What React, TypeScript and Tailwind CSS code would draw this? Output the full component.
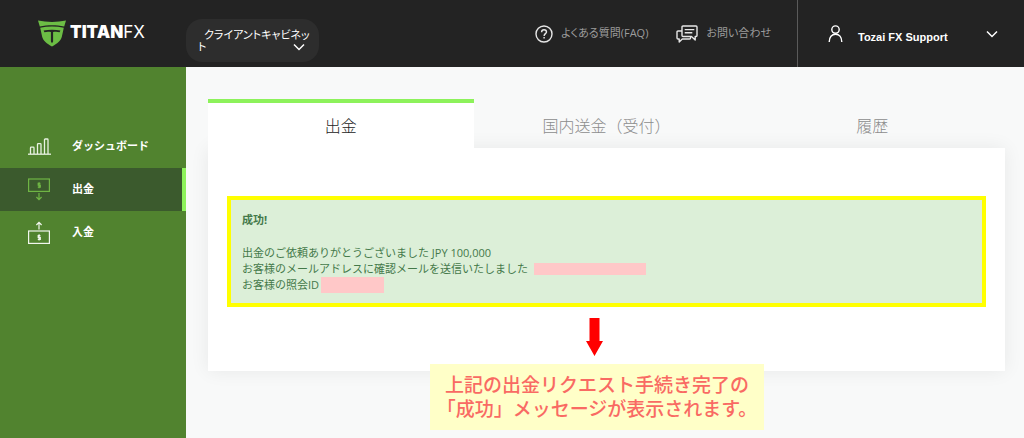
import { useState } from 'react';

type TabKey = 'withdraw' | 'domestic' | 'history';

const TABS: { key: TabKey; label: string }[] = [
  { key: 'withdraw', label: '出金' },
  { key: 'domestic', label: '国内送金（受付）' },
  { key: 'history', label: '履歴' },
];

const MENU = [
  { label: 'ダッシュボード', Icon: ChartIcon, active: false },
  { label: '出金', Icon: WithdrawIcon, active: true },
  { label: '入金', Icon: DepositIcon, active: false },
];

function LogoMark() {
  return (
    <svg width="28" height="27" viewBox="0 0 28 27" fill="#6cbd45" aria-hidden="true">
      <path d="M0 0.5C9 2.4 19 2.4 28 0.5L26.2 6.4C18.5 4.7 9.5 4.7 1.8 6.4Z" />
      <path d="M2.2 7.8C9.8 6.1 18.2 6.1 25.8 7.8L23.9 16.5C23 20.8 19.2 23.6 14 26.6C8.8 23.6 5 20.8 4.1 16.5Z" />
      <path d="M5.6 10.6C11 9.6 17 9.6 22.4 10.6L21.6 12.2C19.4 11.6 17.2 11.5 15.1 12.1V21.5L14 23.2L12.9 21.5V12.1C10.8 11.5 8.6 11.6 6.4 12.2Z" fill="#232323" />
    </svg>
  );
}

function ChevronIcon() {
  return (
    <svg width="12" height="8" viewBox="0 0 12 8" fill="none" stroke="#fff" strokeWidth="1.5" aria-hidden="true">
      <path d="M1 1.5L6 6.5L11 1.5" />
    </svg>
  );
}

function QuestionIcon() {
  return (
    <svg width="18" height="18" viewBox="0 0 18 18" fill="none" stroke="#e6e6e6" strokeWidth="1.4" aria-hidden="true">
      <circle cx="9" cy="9" r="8" />
      <path d="M6.6 7.2C6.6 5.6 7.6 4.7 9 4.7S11.5 5.6 11.5 6.9C11.5 8.6 9.1 8.7 9.1 10.9" />
      <path d="M9.1 12V13.5" />
    </svg>
  );
}

function ChatIcon() {
  return (
    <svg width="22" height="18" viewBox="0 0 22 18" fill="none" stroke="#e6e6e6" strokeWidth="1.4" strokeLinejoin="round" aria-hidden="true">
      <path d="M7 1H20Q21 1 21 2V10.5Q21 11.5 20 11.5H19.2V15L15.5 11.5H7Q6 11.5 6 10.5V2Q6 1 7 1Z" />
      <path d="M8.7 4.6H18.3M8.7 7.8H16.3" />
      <path d="M6 6H2Q1 6 1 7V13Q1 14 2 14H3.2V17L6.3 14H13.5Q14.6 14 14.6 12.8V11.5" />
    </svg>
  );
}

function UserIcon() {
  return (
    <svg width="15" height="17" viewBox="0 0 15 17" fill="none" stroke="#fff" strokeWidth="1.4" aria-hidden="true">
      <circle cx="7.5" cy="4.6" r="3.7" />
      <path d="M1.2 17C1.2 12.2 3.8 9.2 7.5 9.2S13.8 12.2 13.8 17" />
    </svg>
  );
}

function ChartIcon() {
  return (
    <svg width="23" height="17" viewBox="0 0 23 17" fill="none" stroke="#e9f2e2" strokeWidth="1.3" aria-hidden="true">
      <path d="M0 16.2H23" />
      <path d="M2.5 16V9.9Q2.5 9.2 3.2 9.2H5.3Q6 9.2 6 9.9V16" />
      <path d="M9.5 16V6.4Q9.5 5.7 10.2 5.7H12.3Q13 5.7 13 6.4V16" />
      <path d="M16.5 16V1.7Q16.5 1 17.2 1H19.3Q20 1 20 1.7V16" />
    </svg>
  );
}

function WithdrawIcon() {
  return (
    <svg width="22" height="23" viewBox="0 0 22 23" fill="none" stroke="#6fb544" strokeWidth="1.2" aria-hidden="true">
      <rect x="0.6" y="1" width="20.8" height="12.4" />
      <path d="M12.4 5.4H10.2V7.2H12.3V9.2H9.8M11.1 4.3V10.3" />
      <path d="M11 15V21.5M8.4 19L11 21.6L13.6 19" />
    </svg>
  );
}

function DepositIcon() {
  return (
    <svg width="22" height="23" viewBox="0 0 22 23" fill="none" stroke="#f1f6ed" strokeWidth="1.2" aria-hidden="true">
      <rect x="0.6" y="10" width="20.8" height="12.4" />
      <path d="M12.4 14.5H10.2V16.3H12.3V18.3H9.8M11.1 13.3V19.4" />
      <path d="M11 8.5V1.5M8.4 4L11 1.4L13.6 4" />
    </svg>
  );
}

function Header() {
  return (
    <header className="flex h-[67px] shrink-0 items-center bg-[#232323]">
      <a href="#home" className="flex w-[186px] items-center gap-1 pl-[38px] font-['Inter',sans-serif] text-[17px] leading-none text-white">
        <LogoMark />
        <span className="pb-0.5 font-black">
          TITAN<span className="font-normal">FX</span>
        </span>
      </a>

      <button
        type="button"
        className="relative mt-[14px] h-[43px] w-[133px] rounded-2xl bg-[#2d2d2d] pr-[7px] pl-3 text-left text-[11px] leading-3 text-white"
      >
        <span className="block indent-1.5 break-all [font-feature-settings:'palt']">クライアントキャビネット</span>
        <span className="absolute right-[14px] bottom-[11px]">
          <ChevronIcon />
        </span>
      </button>

      <nav className="ml-auto flex items-center gap-7 pr-[26px] text-[11px] text-[#9c9c9c] [font-feature-settings:'palt']">
        <a href="#faq" className="flex items-center gap-2">
          <QuestionIcon />
          よくある質問(FAQ)
        </a>
        <a href="#contact" className="flex items-center gap-2">
          <ChatIcon />
          お問い合わせ
        </a>
      </nav>

      <button
        type="button"
        className="flex h-full w-[227px] items-center border-l border-[#5a5a5a] pr-[26px] pl-[30px] font-['Liberation_Sans',sans-serif] text-[11px] font-bold text-white"
      >
        <UserIcon />
        <span className="pt-2 pl-[15px]">Tozai FX Support</span>
        <span className="ml-auto">
          <ChevronIcon />
        </span>
      </button>
    </header>
  );
}

function Sidebar() {
  return (
    <nav className="w-[186px] shrink-0 bg-[#51832f] pt-[58px]">
      <ul>
        {MENU.map(({ label, Icon, active }) => (
          <li key={label}>
            <a
              href={`#${label}`}
              className={`flex h-[43px] items-center border-r-4 pl-7 text-[11px] font-bold text-white ${
                active ? 'border-[#8df25b] bg-[#3b5a2d]' : 'border-transparent'
              }`}
            >
              <span className="w-11">
                <Icon />
              </span>
              {label}
            </a>
          </li>
        ))}
      </ul>
    </nav>
  );
}

function SuccessAlert() {
  return (
    <div role="status" className="border-4 border-[#ffff00] bg-[#dcefd8] px-[11px] pt-3 pb-2.5 text-[11px] leading-4 text-[#44794a]">
      <p className="mb-[17px] font-bold">成功!</p>
      <p>出金のご依頼ありがとうございました JPY 100,000</p>
      <p className="flex items-center">
        お客様のメールアドレスに確認メールを送信いたしました
        <span className="ml-1.5 h-3 w-28 bg-[#ffc8c8]" />
      </p>
      <p className="flex items-center">
        お客様の照会ID
        <span className="ml-0.5 h-4 w-[63px] bg-[#ffc8c8]" />
      </p>
    </div>
  );
}

function Callout() {
  return (
    <div className="absolute top-[170px] left-[222px] flex w-[334px] flex-col gap-2">
      <svg className="ml-[156px]" width="17" height="38" viewBox="0 0 17 38" fill="#ff0000" aria-hidden="true">
        <path d="M3.5 0H13.5V23H17L8.5 38L0 23H3.5Z" />
      </svg>
      <p className="bg-[#ffffc8] py-[9px] text-center text-[19px] leading-6 font-medium whitespace-nowrap text-[#f96a63]">
        上記の出金リクエスト手続き完了の
        <br />
        「成功」メッセージが表示されます。
      </p>
    </div>
  );
}

export default function App() {
  const [tab, setTab] = useState<TabKey>('withdraw');

  return (
    <div className="flex min-h-screen flex-col bg-[#f8f9f9] font-['Open_Sans','Noto_Sans_CJK_JP',sans-serif]">
      <Header />
      <div className="flex flex-1">
        <Sidebar />
        <main className="flex-1 pt-8 pr-[19px] pb-8 pl-[22px]">
          <div role="tablist" className="grid grid-cols-3">
            {TABS.map(({ key, label }) => (
              <button
                key={key}
                type="button"
                role="tab"
                aria-selected={tab === key}
                onClick={() => setTab(key)}
                className={`h-[49px] border-t-4 text-base font-light ${
                  tab === key ? 'relative z-10 border-[#8df25b] bg-white text-[#222]' : 'border-transparent text-[#8c8c8c]'
                }`}
              >
                {label}
              </button>
            ))}
          </div>
          <section className="relative bg-white px-[19px] pt-12 pb-16 shadow-[0_0_18px_rgba(0,0,0,0.07)]">
            <SuccessAlert />
            <Callout />
          </section>
        </main>
      </div>
    </div>
  );
}
